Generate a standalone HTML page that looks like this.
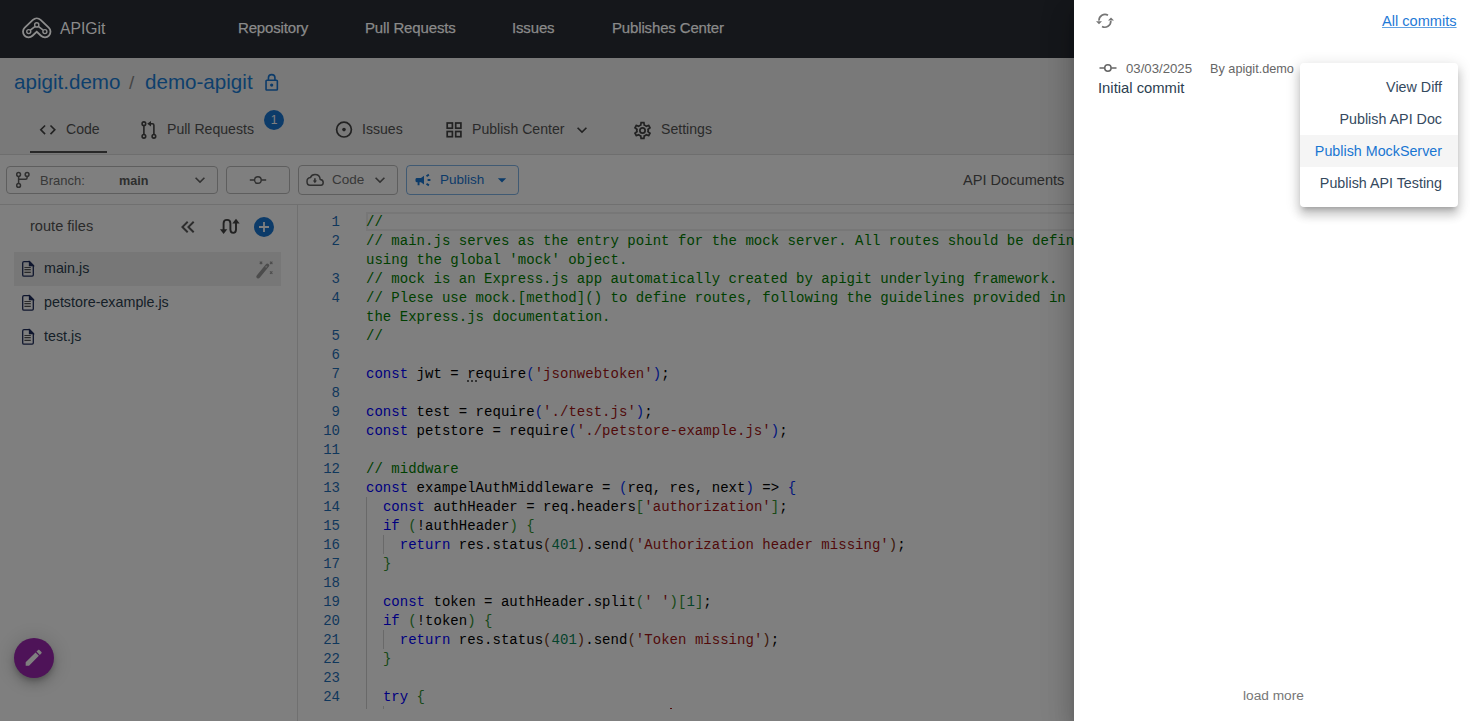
<!DOCTYPE html>
<html><head><meta charset="utf-8">
<style>
*{box-sizing:border-box;margin:0;padding:0}
html,body{width:1470px;height:721px;overflow:hidden;background:#fff;font-family:"Liberation Sans",sans-serif;position:relative}
.a{position:absolute;white-space:nowrap;line-height:1}
svg{position:absolute;display:block}
#hdr{position:absolute;left:0;top:0;width:1470px;height:58px;background:#15171b}
.nav{color:#8a8a8a;-webkit-text-stroke:0.25px #8a8a8a;font-size:15px;letter-spacing:-0.15px;top:19.5px}
.bc{color:#1a7fd9;font-size:20.6px;top:72px}
.tab{color:#555;font-size:14.1px;top:122px}
.btn{position:absolute;border:1px solid #bdbdbd;border-radius:4px;top:166px;height:28px}
.tb{font-size:13px;color:#707070;top:174px}
.file{font-size:14.3px;color:#2c3e50}
#code{position:absolute;left:298px;top:205px;width:776px;height:504px;overflow:hidden;font-family:"Liberation Mono",monospace;font-size:14px}
.ln{position:absolute;margin-top:1px;left:0;width:42px;text-align:right;color:#1f6fb8;line-height:19px}
.cl{position:absolute;margin-top:1px;left:68px;line-height:19px;letter-spacing:0.03px;white-space:pre;color:#000}
.c{color:#008000}.k{color:#0000ff}.s{color:#a31515}.n{color:#098658}.b1{color:#0431fa}.b2{color:#319331}.b3{color:#7b3814}
#ov{position:absolute;left:0;top:0;width:1470px;height:721px;background:rgba(0,0,0,.5)}
#drawer{position:absolute;left:1074px;top:0;width:396px;height:721px;background:#fff;box-shadow:0 8px 10px -5px rgba(0,0,0,.2),0 16px 24px 2px rgba(0,0,0,.14),0 6px 30px 5px rgba(0,0,0,.12)}
#menu{position:absolute;left:1300px;top:63px;width:158px;height:144px;background:#fff;border-radius:4px;box-shadow:0 5px 5px -3px rgba(0,0,0,.2),0 8px 10px 1px rgba(0,0,0,.14),0 3px 14px 2px rgba(0,0,0,.12)}
.mi{position:absolute;right:28px;font-size:14.3px;color:#34495e}
</style></head><body>

<div style="position:absolute;left:0;top:58px;width:1074px;height:96px;background:#f3f3f3"></div>
<!-- breadcrumb -->
<div class="a bc" style="left:14px">apigit.demo</div>
<div class="a bc" style="left:129px;color:#8a8a8a;font-size:19px;top:73px">/</div>
<div class="a bc" style="left:145px">demo-apigit</div>

<!-- tabs -->
<div class="a tab" style="left:66px">Code</div>
<div class="a tab" style="left:167px">Pull Requests</div>
<div class="a tab" style="left:362px">Issues</div>
<div class="a tab" style="left:472px">Publish Center</div>
<div class="a tab" style="left:661px">Settings</div>
<div style="position:absolute;left:30px;top:151px;width:77px;height:2px;background:#505050"></div>
<div style="position:absolute;left:0;top:154px;width:1074px;height:1px;background:#dcdcdc"></div>

<!-- toolbar -->
<div class="btn" style="left:6px;width:212px"></div>
<div class="btn" style="left:226px;width:64px"></div>
<div class="btn" style="left:298px;width:100px;top:165px;height:30px"></div>
<div class="btn" style="left:406px;width:113px;top:165px;height:30px;border-color:rgba(25,118,210,.55)"></div>
<div class="a tb" style="left:40px">Branch:</div>
<div class="a tb" style="left:119px;top:175px;font-weight:700;color:#5c5c5c;font-size:12.6px">main</div>
<div class="a tb" style="left:332px;top:173px;font-size:13.5px">Code</div>
<div class="a tb" style="left:440px;top:173px;font-size:13.5px;color:#1976d2">Publish</div>
<div class="a" style="left:963px;top:173px;font-size:14.6px;color:#555">API Documents</div>
<div style="position:absolute;left:0;top:204px;width:1074px;height:1px;background:#e0e0e0"></div>

<!-- sidebar -->
<div style="position:absolute;left:297px;top:205px;width:1px;height:516px;background:#e0e0e0"></div>
<div class="a" style="left:30px;top:219px;font-size:14.6px;color:#555">route files</div>
<div style="position:absolute;left:14px;top:252px;width:267px;height:34px;background:#eee"></div>
<div class="a file" style="left:44px;top:261px">main.js</div>
<div class="a file" style="left:44px;top:295px">petstore-example.js</div>
<div class="a file" style="left:44px;top:329px">test.js</div>

<!-- code -->
<div id="code">
<div style="position:absolute;left:68px;top:7px;width:720px;height:19px;border:2px solid #eee;border-right:none"></div>
<div style="position:absolute;left:68px;top:292px;width:1px;height:220px;background:#d3d3d3"></div>
<div style="position:absolute;left:85px;top:330px;width:1px;height:19px;background:#d3d3d3"></div>
<div style="position:absolute;left:85px;top:425px;width:1px;height:19px;background:#d3d3d3"></div>
<div style="position:absolute;left:85px;top:501px;width:1px;height:4px;background:#d3d3d3"></div>
<div style="position:absolute;left:372px;top:503px;width:2px;height:1px;background:#a31515"></div>
<div style="position:absolute;left:169px;top:175px;width:2px;height:2px;background:#666"></div><div style="position:absolute;left:173px;top:175px;width:2px;height:2px;background:#666"></div><div style="position:absolute;left:177px;top:175px;width:2px;height:2px;background:#666"></div>
<div class="ln" style="top:7px">1</div>
<div class="cl" style="top:7px"><span class="c">//</span></div>
<div class="ln" style="top:26px">2</div>
<div class="cl" style="top:26px"><span class="c">// main.js serves as the entry point for the mock server. All routes should be defined</span></div>
<div class="cl" style="top:45px"><span class="c">using the global &#x27;mock&#x27; object.</span></div>
<div class="ln" style="top:64px">3</div>
<div class="cl" style="top:64px"><span class="c">// mock is an Express.js app automatically created by apigit underlying framework.</span></div>
<div class="ln" style="top:83px">4</div>
<div class="cl" style="top:83px"><span class="c">// Plese use mock.[method]() to define routes, following the guidelines provided in</span></div>
<div class="cl" style="top:102px"><span class="c">the Express.js documentation.</span></div>
<div class="ln" style="top:121px">5</div>
<div class="cl" style="top:121px"><span class="c">//</span></div>
<div class="ln" style="top:140px">6</div>
<div class="ln" style="top:159px">7</div>
<div class="cl" style="top:159px"><span class="k">const</span> jwt = require<span class="b1">(</span><span class="s">&#x27;jsonwebtoken&#x27;</span><span class="b1">)</span>;</div>
<div class="ln" style="top:178px">8</div>
<div class="ln" style="top:197px">9</div>
<div class="cl" style="top:197px"><span class="k">const</span> test = require<span class="b1">(</span><span class="s">&#x27;./test.js&#x27;</span><span class="b1">)</span>;</div>
<div class="ln" style="top:216px">10</div>
<div class="cl" style="top:216px"><span class="k">const</span> petstore = require<span class="b1">(</span><span class="s">&#x27;./petstore-example.js&#x27;</span><span class="b1">)</span>;</div>
<div class="ln" style="top:235px">11</div>
<div class="ln" style="top:254px">12</div>
<div class="cl" style="top:254px"><span class="c">// middware</span></div>
<div class="ln" style="top:273px">13</div>
<div class="cl" style="top:273px"><span class="k">const</span> exampelAuthMiddleware = <span class="b1">(</span>req, res, next<span class="b1">)</span> =&gt; <span class="b1">{</span></div>
<div class="ln" style="top:292px">14</div>
<div class="cl" style="top:292px">  <span class="k">const</span> authHeader = req.headers<span class="b2">[</span><span class="s">&#x27;authorization&#x27;</span><span class="b2">]</span>;</div>
<div class="ln" style="top:311px">15</div>
<div class="cl" style="top:311px">  <span class="k">if</span> <span class="b2">(</span>!authHeader<span class="b2">)</span> <span class="b2">{</span></div>
<div class="ln" style="top:330px">16</div>
<div class="cl" style="top:330px">    <span class="k">return</span> res.status<span class="b3">(</span><span class="n">401</span><span class="b3">)</span>.send<span class="b3">(</span><span class="s">&#x27;Authorization header missing&#x27;</span><span class="b3">)</span>;</div>
<div class="ln" style="top:349px">17</div>
<div class="cl" style="top:349px">  <span class="b2">}</span></div>
<div class="ln" style="top:368px">18</div>
<div class="ln" style="top:387px">19</div>
<div class="cl" style="top:387px">  <span class="k">const</span> token = authHeader.split<span class="b2">(</span><span class="s">&#x27; &#x27;</span><span class="b2">)</span><span class="b2">[</span><span class="n">1</span><span class="b2">]</span>;</div>
<div class="ln" style="top:406px">20</div>
<div class="cl" style="top:406px">  <span class="k">if</span> <span class="b2">(</span>!token<span class="b2">)</span> <span class="b2">{</span></div>
<div class="ln" style="top:425px">21</div>
<div class="cl" style="top:425px">    <span class="k">return</span> res.status<span class="b3">(</span><span class="n">401</span><span class="b3">)</span>.send<span class="b3">(</span><span class="s">&#x27;Token missing&#x27;</span><span class="b3">)</span>;</div>
<div class="ln" style="top:444px">22</div>
<div class="cl" style="top:444px">  <span class="b2">}</span></div>
<div class="ln" style="top:463px">23</div>
<div class="ln" style="top:482px">24</div>
<div class="cl" style="top:482px">  <span class="k">try</span> <span class="b2">{</span></div>

</div>

<!-- fab -->
<div style="position:absolute;left:14px;top:638px;width:40px;height:40px;border-radius:50%;background:#9c27b0;box-shadow:0 3px 5px -1px rgba(0,0,0,.2),0 6px 10px 0 rgba(0,0,0,.14),0 2px 20px 4px rgba(0,0,0,.12)"></div>


<!-- icons -->

<svg style="left:261.7px;top:72.5px" width="19.4" height="19.4" viewBox="0 0 24 24"><path fill="#1976d2" d="M12,17C10.89,17 10,16.1 10,15C10,13.89 10.89,13 12,13A2,2 0 0,1 14,15A2,2 0 0,1 12,17M18,20V10H6V20H18M18,8A2,2 0 0,1 20,10V20A2,2 0 0,1 18,22H6C4.89,22 4,21.1 4,20V10C4,8.89 4.89,8 6,8H7V6A5,5 0 0,1 12,1A5,5 0 0,1 17,6V8H18M12,3A3,3 0 0,0 9,6V8H15V6A3,3 0 0,0 12,3Z"/></svg>
<svg style="left:38.2px;top:120px" width="19.6" height="19.6" viewBox="0 0 24 24"><path fill="#444" d="M14.6,16.6L19.2,12L14.6,7.4L16,6L22,12L16,18L14.6,16.6M9.4,16.6L4.8,12L9.4,7.4L8,6L2,12L8,18L9.4,16.6Z"/></svg>
<svg style="left:134px;top:114px" width="30" height="30" viewBox="0 0 30 30" fill="none" stroke="#444" stroke-width="1.6">
  <circle cx="9.9" cy="9.7" r="1.8"/><circle cx="9.9" cy="22.3" r="1.8"/><circle cx="19.9" cy="22.3" r="1.8"/>
  <path d="M9.9 11.5V20.5M19.9 20.5V11.2Q19.9 9.7 18.4 9.7H16"/>
  <path d="M17 6.9L13.2 9.7L17 12.5Z" fill="#444" stroke="none"/>
</svg>
<svg style="left:334px;top:120px" width="20" height="20" viewBox="0 0 20 20" fill="none" stroke="#444"><circle cx="10" cy="9.6" r="7.4" stroke-width="1.7"/><circle cx="10" cy="9.6" r="1.8" fill="#444" stroke="none"/></svg>
<svg style="left:444px;top:119.5px" width="20" height="20" viewBox="0 0 20 20" fill="none" stroke="#444" stroke-width="1.7"><rect x="3.2" y="3" width="5.2" height="5.2"/><rect x="11.7" y="3" width="5.2" height="5.2"/><rect x="3.2" y="11.5" width="5.2" height="5.2"/><rect x="11.7" y="11.5" width="5.2" height="5.2"/></svg>
<svg style="left:572px;top:120px" width="20" height="20" viewBox="0 0 24 24"><path fill="#444" d="M7.41,8.58L12,13.17L16.59,8.58L18,10L12,16L6,10L7.41,8.58Z"/></svg>
<svg style="left:631.7px;top:119.6px" width="21" height="21" viewBox="0 0 24 24"><path fill="#444" d="M12,8A4,4 0 0,1 16,12A4,4 0 0,1 12,16A4,4 0 0,1 8,12A4,4 0 0,1 12,8M12,10A2,2 0 0,0 10,12A2,2 0 0,0 12,14A2,2 0 0,0 14,12A2,2 0 0,0 12,10M10,22C9.75,22 9.54,21.82 9.5,21.58L9.13,18.93C8.5,18.68 7.96,18.34 7.44,17.94L4.95,18.95C4.73,19.03 4.46,18.95 4.34,18.73L2.34,15.27C2.21,15.05 2.27,14.78 2.46,14.63L4.57,12.97L4.5,12L4.57,11L2.46,9.37C2.27,9.22 2.21,8.95 2.34,8.73L4.34,5.27C4.46,5.05 4.73,4.96 4.95,5.05L7.44,6.05C7.96,5.66 8.5,5.32 9.13,5.07L9.5,2.42C9.54,2.18 9.750,2 10,2H14C14.25,2 14.46,2.18 14.5,2.42L14.87,5.07C15.5,5.32 16.04,5.66 16.56,6.05L19.05,5.05C19.27,4.96 19.54,5.05 19.66,5.27L21.66,8.73C21.79,8.95 21.73,9.22 21.54,9.37L19.43,11L19.5,12L19.43,13L21.54,14.63C21.73,14.78 21.79,15.05 21.66,15.27L19.66,18.73C19.54,18.95 19.27,19.04 19.05,18.95L16.56,17.95C16.04,18.34 15.5,18.68 14.87,18.93L14.5,21.58C14.46,21.82 14.25,22 14,22H10M11.25,4L10.88,6.61C9.68,6.86 8.62,7.5 7.850,8.39L5.44,7.35L4.69,8.65L6.8,10.2C6.4,11.37 6.4,12.64 6.8,13.8L4.68,15.36L5.43,16.66L7.86,15.62C8.63,16.5 9.68,17.14 10.87,17.38L11.24,20H12.76L13.13,17.39C14.32,17.14 15.37,16.5 16.14,15.62L18.57,16.66L19.32,15.36L17.2,13.81C17.6,12.64 17.6,11.37 17.2,10.2L19.31,8.65L18.56,7.35L16.15,8.39C15.38,7.5 14.32,6.86 13.12,6.62L12.75,4H11.25Z"/></svg>
<div style="position:absolute;left:264px;top:110px;width:20px;height:20px;border-radius:50%;background:#1976d2;color:#fff;font-size:12px;line-height:20px;text-align:center">1</div>

<svg style="left:10px;top:166px" width="30" height="30" viewBox="0 0 30 30" fill="none" stroke="#5f5f5f" stroke-width="1.5">
  <circle cx="8.6" cy="8.5" r="1.9"/><circle cx="8.6" cy="19.4" r="1.9"/><circle cx="17.1" cy="8.5" r="1.9"/>
  <path d="M8.6 10.4V17.5M17.1 10.4V11.8Q17.1 13.3 15.6 13.3H8.6"/>
</svg>
<svg style="left:190px;top:170px" width="20" height="20" viewBox="0 0 24 24"><path fill="#666" d="M7.41,8.58L12,13.17L16.59,8.58L18,10L12,16L6,10L7.41,8.58Z"/></svg>
<svg style="left:240px;top:166px" width="40" height="30" viewBox="0 0 40 30" fill="none" stroke="#5f5f5f"><circle cx="17.9" cy="14" r="3.3" stroke-width="1.4"/><path d="M9.8 14H14.6M21.2 14H26.2" stroke-width="1.6"/></svg>
<svg style="left:300px;top:166px" width="30" height="30" viewBox="0 0 30 30" fill="none" stroke="#606060" stroke-width="1.5">
  <path d="M10 19.2H21Q23.2 19.2 23.2 16.5Q23.2 13.6 20.2 13.4Q19.6 8.6 15 8.6Q11.6 8.6 10.4 11.6Q7 12 7 15.4Q7 19.2 10 19.2Z"/>
  <path d="M14.9 12.2V15.8" stroke-width="1.6"/><path d="M12.8 14.6L14.9 17.2L17 14.6Z" fill="#606060" stroke="none"/>
</svg>
<svg style="left:370px;top:170px" width="20" height="20" viewBox="0 0 24 24"><path fill="#666" d="M7.41,8.58L12,13.17L16.59,8.58L18,10L12,16L6,10L7.41,8.58Z"/></svg>
<svg style="left:410px;top:166px" width="30" height="30" viewBox="0 0 30 30">
  <path fill="#1976d2" d="M6.6 11.9H11L14 9.7V18.6L11 16.3H9.5V19.3H7.6V16.3H6.6Q5.4 16.3 5.4 14.1Q5.4 11.9 6.6 11.9Z"/>
  <path d="M16.5 10.2L18.9 8.6M17.6 14H20.4M16.5 17.8L18.9 19.4" stroke="#1976d2" stroke-width="1.9"/>
</svg>
<svg style="left:492px;top:170px" width="20" height="20" viewBox="0 0 24 24"><path fill="#1976d2" d="M7,10L12,15L17,10H7Z"/></svg>

<svg style="left:176px;top:215px" width="24" height="24" viewBox="0 0 24 24"><path fill="#5a5a5a" d="M18.41,7.41L17,6L11,12L17,18L18.41,16.59L13.83,12L18.41,7.41M12.41,7.41L11,6L5,12L11,18L12.41,16.59L7.83,12L12.41,7.41Z"/></svg>
<svg style="left:216px;top:214px" width="28" height="24" viewBox="0 0 28 24" fill="none" stroke="#444" stroke-width="1.9">
  <path d="M7.6 16.2V9.2Q7.6 5.9 11 5.9Q14.4 5.9 14.4 9.2V15.6Q14.4 18.9 17.2 18.9Q20 18.9 20 15.6V8.8"/>
  <path d="M3.9 15.2L7.6 19.9L11.3 15.2Z" fill="#444" stroke="none"/><path d="M16.3 9.4L20 4.7L23.7 9.4Z" fill="#444" stroke="none"/>
</svg>
<svg style="left:254px;top:217px" width="20" height="20" viewBox="0 0 20 20"><circle cx="10" cy="10" r="10" fill="#1976d2"/><path d="M10 5V15M5 10H15" stroke="#fff" stroke-width="1.8"/></svg>

<svg style="left:14px;top:255px" width="30" height="30" viewBox="0 0 30 30" fill="none" stroke="#1f2d5c" stroke-width="1.3">
  <path d="M10 6.7H15.5L19.3 10.5V20.1Q19.3 21.2 18.2 21.2H10Q8.7 21.2 8.7 19.9V8Q8.7 6.7 10 6.7Z"/>
  <path d="M15.5 6.7V10.5H19.3Z" fill="#1f2d5c"/>
  <path d="M10.4 12.5H16.8M10.4 14.6H16.8M10.4 17.4H16.8" stroke="#555" stroke-width="1.1"/>
</svg>
<svg style="left:14px;top:289px" width="30" height="30" viewBox="0 0 30 30" fill="none" stroke="#1f2d5c" stroke-width="1.3">
  <path d="M10 6.7H15.5L19.3 10.5V20.1Q19.3 21.2 18.2 21.2H10Q8.7 21.2 8.7 19.9V8Q8.7 6.7 10 6.7Z"/>
  <path d="M15.5 6.7V10.5H19.3Z" fill="#1f2d5c"/>
  <path d="M10.4 12.5H16.8M10.4 14.6H16.8M10.4 17.4H16.8" stroke="#555" stroke-width="1.1"/>
</svg>
<svg style="left:14px;top:323px" width="30" height="30" viewBox="0 0 30 30" fill="none" stroke="#1f2d5c" stroke-width="1.3">
  <path d="M10 6.7H15.5L19.3 10.5V20.1Q19.3 21.2 18.2 21.2H10Q8.7 21.2 8.7 19.9V8Q8.7 6.7 10 6.7Z"/>
  <path d="M15.5 6.7V10.5H19.3Z" fill="#1f2d5c"/>
  <path d="M10.4 12.5H16.8M10.4 14.6H16.8M10.4 17.4H16.8" stroke="#555" stroke-width="1.1"/>
</svg>
<svg style="left:250px;top:255px" width="30" height="30" viewBox="0 0 30 30">
  <path d="M8.2 21.6L17.4 10.4" stroke="#989898" stroke-width="3.8" stroke-linecap="round"/>
  <path d="M15.6 12.6L16.9 11" stroke="#c8c8c8" stroke-width="1.6"/>
  <path d="M9.8 6.6L12.2 9M12.2 6.6L9.8 9M20 6.6L22.4 9M22.4 6.6L20 9M20 16.4L22.4 18.8M22.4 16.4L20 18.8" stroke="#989898" stroke-width="1.1"/>
</svg>
<svg style="left:23px;top:647px" width="21.4" height="21.4" viewBox="0 0 24 24"><path fill="#fff" d="M20.71,7.04C21.1,6.65 21.1,6 20.71,5.63L18.37,3.29C18,2.9 17.35,2.9 16.96,3.29L15.12,5.12L18.87,8.87M3,17.25V21H6.75L17.81,9.93L14.06,6.18L3,17.25Z"/></svg>

<div id="ov"></div>
<div id="hdr"></div>

<div class="a" style="left:60px;top:21px;font-size:15.7px;color:#8a8a8a">APIGit</div>
<div class="a nav" style="left:238px">Repository</div>
<div class="a nav" style="left:365px">Pull Requests</div>
<div class="a nav" style="left:512px">Issues</div>
<div class="a nav" style="left:612px">Publishes Center</div>

<svg style="left:18px;top:12px" width="40" height="32" viewBox="0 0 40 32">
  <path d="M10.6 19.7 L18.75 12 L26.9 19.7" fill="none" stroke="#8d8d8d" stroke-width="13" stroke-linecap="round" stroke-linejoin="round"/>
  <path d="M10.6 19.7 L18.75 12 L26.9 19.7" fill="none" stroke="#15171b" stroke-width="9.4" stroke-linecap="round" stroke-linejoin="round"/>
  <path d="M12.3 18.2 L17.2 14.3 M20.3 14.3 L25.2 18.2" stroke="#8d8d8d" stroke-width="1.7"/>
  <circle cx="18.75" cy="12.9" r="2.1" fill="none" stroke="#8d8d8d" stroke-width="1.4"/>
  <circle cx="10.75" cy="19.6" r="2" fill="none" stroke="#8d8d8d" stroke-width="1.4"/>
  <circle cx="26.9" cy="19.6" r="2" fill="none" stroke="#8d8d8d" stroke-width="1.4"/>
</svg>


<div id="drawer"></div>
<div class="a" style="left:1382px;top:14px;font-size:14.6px;color:#1f7ad6;text-decoration:underline;text-decoration-color:rgba(31,122,214,.7)">All commits</div>
<div class="a" style="left:1126px;top:62px;font-size:13.2px;color:#666">03/03/2025</div>
<div class="a" style="left:1210px;top:63px;font-size:12.7px;color:#666">By apigit.demo</div>
<div class="a" style="left:1098px;top:81px;font-size:14.8px;color:#2c3e50">Initial commit</div>
<div class="a" style="left:1243px;top:689px;font-size:13.7px;color:#777">load more</div>


<svg style="left:1090px;top:5px" width="30" height="30" viewBox="0 0 30 30" fill="none" stroke="#757575" stroke-width="1.7">
  <path d="M18 10.2A6 6 0 0 0 9 15.6"/><path d="M12 21.5A6 6 0 0 0 20.8 16"/>
  <path d="M6 16.2H12L9 19.2Z" fill="#757575" stroke="none"/><path d="M18 15.4H24L21 12.4Z" fill="#757575" stroke="none"/>
</svg>
<svg style="left:1090px;top:58px" width="30" height="20" viewBox="0 0 30 20" fill="none" stroke="#666"><circle cx="17.9" cy="10" r="3.2" stroke-width="1.5"/><path d="M9.5 10H14.5M21.2 10H26.5" stroke-width="1.6"/></svg>

<div id="menu"></div>
<div class="a mi" style="top:80px">View Diff</div>
<div class="a mi" style="top:112px">Publish API Doc</div>
<div style="position:absolute;left:1300px;top:135px;width:158px;height:32px;background:#f5f5f5"></div>
<div class="a mi" style="top:144px;color:#1976d2">Publish MockServer</div>
<div class="a mi" style="top:176px">Publish API Testing</div>

</body></html>
